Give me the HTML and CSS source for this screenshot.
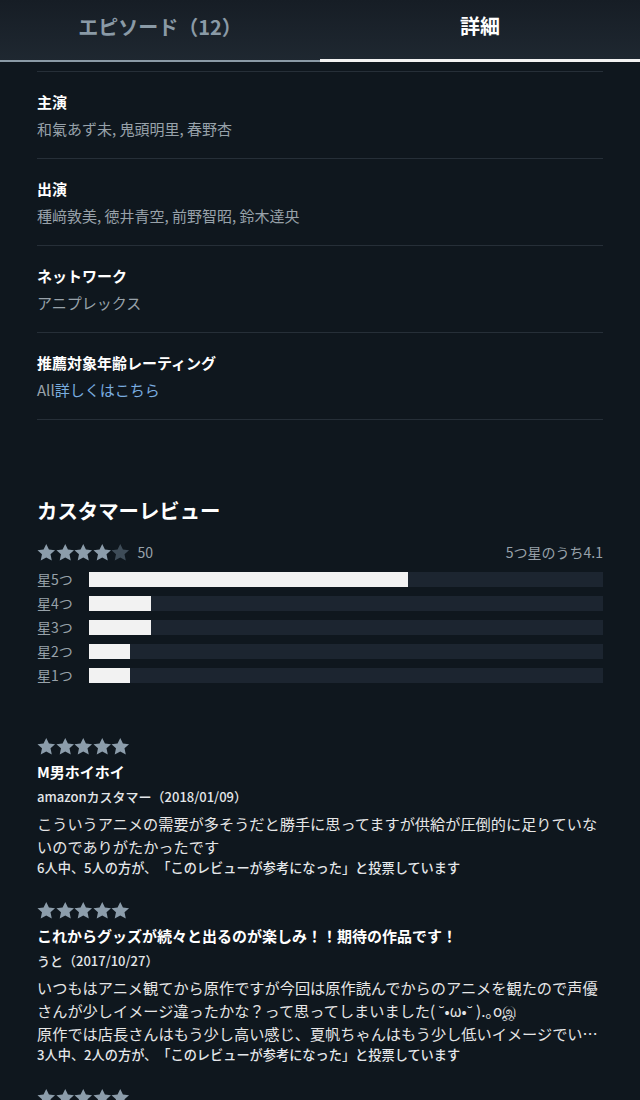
FILE: index.html
```html
<!DOCTYPE html>
<html lang="ja">

<head>
    <meta charset="utf-8">
    <title>詳細</title>
    <link rel="stylesheet" href="styles.css">
</head>

<body>
    <div class="tabs">
        <div class="tab">エピソード（12）</div>
        <div class="tab active">詳細</div>
    </div>

    <div class="details">
        <div class="detail">
            <div class="label">主演</div>
            <div class="value">和氣あず未, 鬼頭明里, 春野杏</div>
        </div>
        <div class="detail">
            <div class="label">出演</div>
            <div class="value">種﨑敦美, 徳井青空, 前野智昭, 鈴木達央</div>
        </div>
        <div class="detail">
            <div class="label">ネットワーク</div>
            <div class="value">アニプレックス</div>
        </div>
        <div class="detail">
            <div class="label">推薦対象年齢レーティング</div>
            <div class="value">All<a href="#" class="link">詳しくはこちら</a></div>
        </div>
    </div>

    <div class="reviews">
        <h2>カスタマーレビュー</h2>

        <div class="summary">
            <div class="stars">
                <svg viewBox="0 0 20 20"><path class="on" d="M10 .8l2.9 6 6.6.7-4.9 4.5 1.4 6.6L10 15.3l-6 3.3 1.4-6.6L.5 7.5l6.6-.7z"/></svg>
                <svg viewBox="0 0 20 20"><path class="on" d="M10 .8l2.9 6 6.6.7-4.9 4.5 1.4 6.6L10 15.3l-6 3.3 1.4-6.6L.5 7.5l6.6-.7z"/></svg>
                <svg viewBox="0 0 20 20"><path class="on" d="M10 .8l2.9 6 6.6.7-4.9 4.5 1.4 6.6L10 15.3l-6 3.3 1.4-6.6L.5 7.5l6.6-.7z"/></svg>
                <svg viewBox="0 0 20 20"><path class="on" d="M10 .8l2.9 6 6.6.7-4.9 4.5 1.4 6.6L10 15.3l-6 3.3 1.4-6.6L.5 7.5l6.6-.7z"/></svg>
                <svg viewBox="0 0 20 20"><path class="off" d="M10 .8l2.9 6 6.6.7-4.9 4.5 1.4 6.6L10 15.3l-6 3.3 1.4-6.6L.5 7.5l6.6-.7z"/></svg>
                <span class="count">50</span>
            </div>
            <span class="average">5つ星のうち4.1</span>
        </div>

        <div class="histogram">
            <div class="bar-row"><span>星5つ</span><div class="track"><div class="fill" style="width: 62%"></div></div></div>
            <div class="bar-row"><span>星4つ</span><div class="track"><div class="fill" style="width: 12%"></div></div></div>
            <div class="bar-row"><span>星3つ</span><div class="track"><div class="fill" style="width: 12%"></div></div></div>
            <div class="bar-row"><span>星2つ</span><div class="track"><div class="fill" style="width: 8%"></div></div></div>
            <div class="bar-row"><span>星1つ</span><div class="track"><div class="fill" style="width: 8%"></div></div></div>
        </div>

        <div class="review">
            <div class="stars">
                <svg viewBox="0 0 20 20"><path class="on" d="M10 .8l2.9 6 6.6.7-4.9 4.5 1.4 6.6L10 15.3l-6 3.3 1.4-6.6L.5 7.5l6.6-.7z"/></svg>
                <svg viewBox="0 0 20 20"><path class="on" d="M10 .8l2.9 6 6.6.7-4.9 4.5 1.4 6.6L10 15.3l-6 3.3 1.4-6.6L.5 7.5l6.6-.7z"/></svg>
                <svg viewBox="0 0 20 20"><path class="on" d="M10 .8l2.9 6 6.6.7-4.9 4.5 1.4 6.6L10 15.3l-6 3.3 1.4-6.6L.5 7.5l6.6-.7z"/></svg>
                <svg viewBox="0 0 20 20"><path class="on" d="M10 .8l2.9 6 6.6.7-4.9 4.5 1.4 6.6L10 15.3l-6 3.3 1.4-6.6L.5 7.5l6.6-.7z"/></svg>
                <svg viewBox="0 0 20 20"><path class="on" d="M10 .8l2.9 6 6.6.7-4.9 4.5 1.4 6.6L10 15.3l-6 3.3 1.4-6.6L.5 7.5l6.6-.7z"/></svg>
            </div>
            <div class="title">M男ホイホイ</div>
            <div class="author">amazonカスタマー（2018/01/09）</div>
            <p class="body">こういうアニメの需要が多そうだと勝手に思ってますが供給が圧倒的に足りていないのでありがたかったです</p>
            <div class="votes">6人中、5人の方が、「このレビューが参考になった」と投票しています</div>
        </div>

        <div class="review">
            <div class="stars">
                <svg viewBox="0 0 20 20"><path class="on" d="M10 .8l2.9 6 6.6.7-4.9 4.5 1.4 6.6L10 15.3l-6 3.3 1.4-6.6L.5 7.5l6.6-.7z"/></svg>
                <svg viewBox="0 0 20 20"><path class="on" d="M10 .8l2.9 6 6.6.7-4.9 4.5 1.4 6.6L10 15.3l-6 3.3 1.4-6.6L.5 7.5l6.6-.7z"/></svg>
                <svg viewBox="0 0 20 20"><path class="on" d="M10 .8l2.9 6 6.6.7-4.9 4.5 1.4 6.6L10 15.3l-6 3.3 1.4-6.6L.5 7.5l6.6-.7z"/></svg>
                <svg viewBox="0 0 20 20"><path class="on" d="M10 .8l2.9 6 6.6.7-4.9 4.5 1.4 6.6L10 15.3l-6 3.3 1.4-6.6L.5 7.5l6.6-.7z"/></svg>
                <svg viewBox="0 0 20 20"><path class="on" d="M10 .8l2.9 6 6.6.7-4.9 4.5 1.4 6.6L10 15.3l-6 3.3 1.4-6.6L.5 7.5l6.6-.7z"/></svg>
            </div>
            <div class="title">これからグッズが続々と出るのが楽しみ！！期待の作品です！</div>
            <div class="author">うと（2017/10/27）</div>
            <p class="body">いつもはアニメ観てから原作ですが今回は原作読んでからのアニメを観たので声優さんが少しイメージ違ったかな？って思ってしまいました( ˘•ω•˘ ).｡oஇ<br>原作では店長さんはもう少し高い感じ、夏帆ちゃんはもう少し低いイメージでい…</p>
            <div class="votes">3人中、2人の方が、「このレビューが参考になった」と投票しています</div>
        </div>

        <div class="review">
            <div class="stars">
                <svg viewBox="0 0 20 20"><path class="on" d="M10 .8l2.9 6 6.6.7-4.9 4.5 1.4 6.6L10 15.3l-6 3.3 1.4-6.6L.5 7.5l6.6-.7z"/></svg>
                <svg viewBox="0 0 20 20"><path class="on" d="M10 .8l2.9 6 6.6.7-4.9 4.5 1.4 6.6L10 15.3l-6 3.3 1.4-6.6L.5 7.5l6.6-.7z"/></svg>
                <svg viewBox="0 0 20 20"><path class="on" d="M10 .8l2.9 6 6.6.7-4.9 4.5 1.4 6.6L10 15.3l-6 3.3 1.4-6.6L.5 7.5l6.6-.7z"/></svg>
                <svg viewBox="0 0 20 20"><path class="on" d="M10 .8l2.9 6 6.6.7-4.9 4.5 1.4 6.6L10 15.3l-6 3.3 1.4-6.6L.5 7.5l6.6-.7z"/></svg>
                <svg viewBox="0 0 20 20"><path class="on" d="M10 .8l2.9 6 6.6.7-4.9 4.5 1.4 6.6L10 15.3l-6 3.3 1.4-6.6L.5 7.5l6.6-.7z"/></svg>
            </div>
        </div>
    </div>
</body>

</html>
```

FILE: styles.css
```css
body {
    margin: 0;
    background-color: #0f171e;
    color: #fff;
    font-family: "Noto Sans CJK JP", "Noto Sans", sans-serif;
}

/* tab bar */
.tabs {
    display: flex;
    background: linear-gradient(#161d25, #1f2831);
}

.tab {
    flex: 1;
    height: 62px;
    display: flex;
    align-items: center;
    justify-content: center;
    padding-bottom: 8px;
    box-sizing: border-box;
    font-size: 20px;
    font-weight: bold;
    color: #8a9aa6;
    border-bottom: 2px solid #8a9aa6;
}

.tab.active {
    color: #fff;
    border-bottom: 3px solid #f2f2f2;
    height: 63px;
    margin-top: -1px;
}

/* detail rows */
.details {
    margin: 9px 37px 0;
    border-top: 1px solid #262f38;
}

.detail {
    padding: 20px 0 19px;
    border-bottom: 1px solid #262f38;
}

.label {
    font-size: 15px;
    line-height: 20px;
    font-weight: bold;
}

.value {
    font-size: 15px;
    line-height: 20px;
    color: #98a2aa;
    margin-top: 7px;
}

.link {
    color: #7aaee0;
    text-decoration: none;
}

/* reviews */
.reviews {
    padding: 0 37px;
}

h2 {
    margin: 76px 0 0;
    font-size: 20.4px;
    line-height: 28px;
    font-weight: bold;
}

.summary {
    display: flex;
    justify-content: space-between;
    align-items: center;
    margin-top: 18px;
    height: 20px;
    font-size: 14px;
    color: #98a2aa;
}

.stars {
    display: flex;
    align-items: center;
}

.stars svg {
    width: 18.5px;
    height: 19px;
}

.stars .on {
    fill: #8c9dab;
}

.stars .off {
    fill: #3e4c58;
}

.count {
    margin-left: 8px;
}

.histogram {
    margin-top: 5px;
}

.bar-row {
    display: flex;
    align-items: center;
    height: 24px;
    font-size: 14px;
    color: #98a2aa;
}

.bar-row span {
    width: 52px;
}

.track {
    flex: 1;
    height: 15px;
    background-color: #1c2530;
}

.fill {
    height: 100%;
    background-color: #f2f2f2;
}

.review {
    margin-top: 24px;
}

.histogram + .review {
    margin-top: 50px;
}

.title {
    margin-top: 5px;
    font-size: 15px;
    line-height: 22px;
    font-weight: bold;
}

.author {
    margin-top: 4px;
    font-size: 13px;
    line-height: 20px;
    font-weight: 500;
    color: #e4e7ea;
}

.body {
    margin: 5px 0 0;
    font-size: 15.2px;
    line-height: 23px;
    color: #e6e6e6;
}

.votes {
    font-size: 13.2px;
    line-height: 19px;
    font-weight: 500;
    color: #e4e7ea;
    text-spacing-trim: space-all;
}
```
